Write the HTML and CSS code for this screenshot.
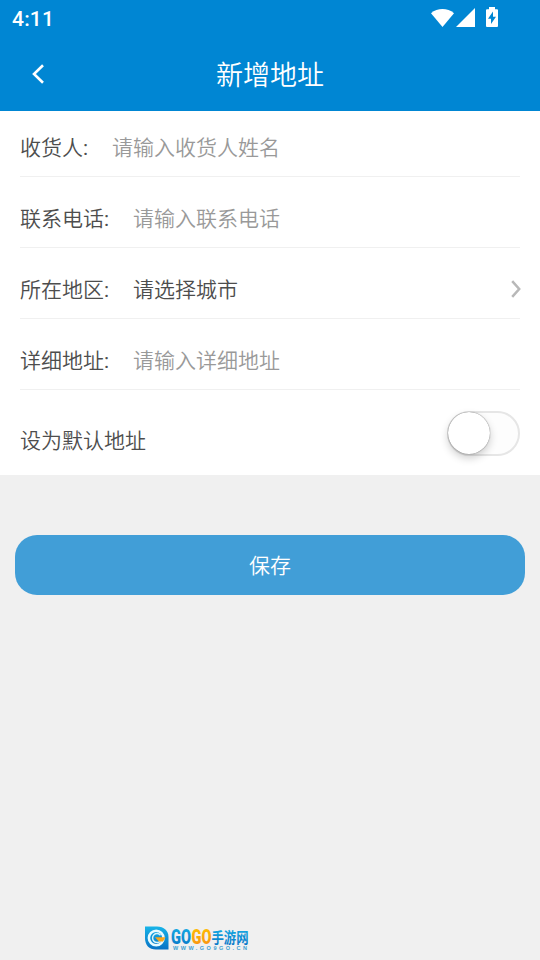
FILE: index.html
```html
<!DOCTYPE html>
<html lang="zh-CN">
<head>
<meta charset="utf-8">
<title>新增地址</title>
<link rel="stylesheet" href="styles.css">
</head>
<body>
<header class="top">
  <div class="status">
    <span class="clock">4:11</span>
    <svg class="status-icons" width="70" height="24" viewBox="0 0 70 24" fill="#fff">
      <path d="M1 8.2C7.500 2.600 17.500 2.600 24 8.200L12.500 22Z"/>
      <path d="M26 22H45V3Z"/>
      <path fill-rule="evenodd" d="M59 2h6v2.200h2q1 0 1 1V21q0 1-1 1H57q-1 0-1-1V5.200q0-1 1-1h2ZM63 6.500l-5 7.300h3V19l5-7.300h-3Z"/>
    </svg>
  </div>
  <div class="navbar">
    <svg class="back" width="14" height="22" viewBox="0 0 14 22"><path d="M12 2.200L3 11l9 8.800" fill="none" stroke="#fff" stroke-width="2.600"/></svg>
    <h1 class="title">新增地址</h1>
  </div>
</header>
<main>
  <form class="form">
    <div class="row"><span class="label">收货人<span class="colon">:</span></span><span class="hint">请输入收货人姓名</span></div>
    <div class="row"><span class="label">联系电话<span class="colon">:</span></span><span class="hint">请输入联系电话</span></div>
    <div class="row"><span class="label">所在地区<span class="colon">:</span></span><span class="value">请选择城市</span>
      <svg class="chevron" width="11" height="20" viewBox="0 0 11 20"><path d="M2.200 2.200L9.200 10l-7 7.800" fill="none" stroke="#b8b8b8" stroke-width="2.500"/></svg>
    </div>
    <div class="row"><span class="label">详细地址<span class="colon">:</span></span><span class="hint">请输入详细地址</span></div>
    <div class="row-default"><span class="default-label">设为默认地址</span><span class="switch"><span class="knob"></span></span></div>
  </form>
  <button class="save" type="button">保存</button>
</main>
<footer class="brand">
  <svg class="brand-logo" width="106" height="26" viewBox="0 0 106 26">
    <defs>
      <linearGradient id="blue" x1="0" y1="0" x2="0" y2="1"><stop offset="0" stop-color="#18b4e8"/><stop offset="1" stop-color="#0872c5"/></linearGradient>
      <linearGradient id="orange" x1="0" y1="0" x2="0" y2="1"><stop offset="0" stop-color="#ffc400"/><stop offset="1" stop-color="#f98d13"/></linearGradient>
    </defs>
    <path d="M1 .5H13C20 .5 24.500 5 24.500 11V23.500H12C5 23.500 1 19 1 12Z" fill="url(#blue)"/>
    <circle cx="12.200" cy="12" r="7.300" fill="none" stroke="#e9faff" stroke-width="2.600"/>
    <path d="M16.500 9.200A4.500 4.500 0 1 0 16.500 15" fill="none" stroke="#d8f4fb" stroke-width="1.500"/>
    <path d="M11 11.200H21.500L19 15.500H15Z" fill="#f9a51b"/>
    <text class="latin" x="27" y="17.500" textLength="20" lengthAdjust="spacingAndGlyphs" fill="url(#blue)">GO</text>
    <text class="latin" x="47.500" y="17.500" textLength="20" lengthAdjust="spacingAndGlyphs" fill="url(#orange)">GO</text>
    <text class="cn" x="67.500" y="16.700" textLength="37" lengthAdjust="spacingAndGlyphs" fill="url(#blue)">手游网</text>
    <text class="url" x="29" y="24" textLength="74">WWW.GO9GO.CN</text>
  </svg>
</footer>
</body>
</html>
```
FILE: styles.css
```css
* { box-sizing: border-box; }
body {
  margin: 0;
  height: 960px;
  display: flex;
  flex-direction: column;
  background: #f0f0f0;
  color: #4d4d4d;
  font: 350 21px/30px Roboto, "Noto Sans CJK SC", sans-serif;
  overflow: hidden;
}
svg { display: block; flex: none; }
.top { height: 111px; background: #0086d3; color: #fff; }
.status {
  height: 36px;
  padding: 0 40px 0 12px;
  display: flex;
  justify-content: space-between;
  align-items: center;
}
.clock { font-size: 21px; font-weight: 500; letter-spacing: .2px; padding-top: 2px; }
.status-icons { margin-top: -2px; }
.navbar {
  height: 75px;
  padding: 0 31px;
  display: grid;
  grid-template-columns: 14px 1fr 14px;
  align-items: center;
}
.title { margin: 0; padding-top: 4px; font-size: 27px; font-weight: 350; text-align: center; line-height: 40px; }
.form { height: 364px; padding: 0 20px; background: #fff; }
.row {
  height: 71px;
  padding-top: 13px;
  border-bottom: 1px solid #f0f0f0;
  display: flex;
  align-items: center;
}
.row:first-child { height: 66px; padding-top: 9px; }
.label { margin-right: 24px; }
.colon { font-weight: 400; }
.hint { color: #999; }
.chevron { margin: -2px -1px 0 auto; }
.row-default {
  height: 85px;
  display: flex;
  justify-content: space-between;
  align-items: flex-start;
}
.default-label { padding-top: 36px; }
.switch {
  width: 73px;
  height: 45px;
  margin-top: 21px;
  border: 2px solid #e6e6e6;
  border-radius: 23px;
  background: #fdfdfd;
}
.knob {
  display: block;
  width: 42px;
  height: 42px;
  margin: -1px 0 0 -1px;
  border-radius: 50%;
  background: #fff;
  box-shadow: 0 0 1px rgba(0, 0, 0, .7), 0 4px 8px rgba(0, 0, 0, .2);
}
.save {
  display: block;
  width: 510px;
  height: 60px;
  margin: 60px auto 0;
  padding: 2px 0 0;
  border: 0;
  border-radius: 22px;
  background: #419ed7;
  color: #fff;
  font: inherit;
}
.brand { margin: auto 0 8px 144px; }
.latin { font: 900 21px Roboto, sans-serif; }
.cn { font: 700 15px "Noto Sans CJK SC", sans-serif; }
.url { font: 700 5.500px "Liberation Sans", sans-serif; fill: #3d9fd2; }
```
